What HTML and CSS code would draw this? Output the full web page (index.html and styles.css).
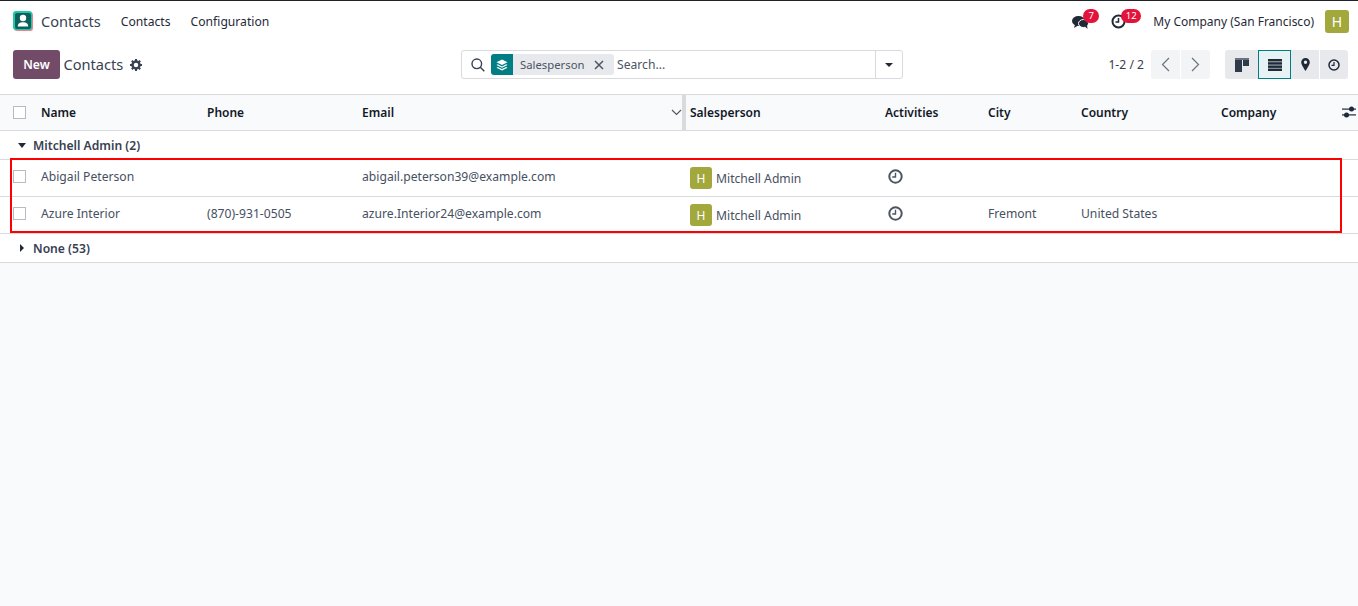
FILE: index.html
```html
<!DOCTYPE html>
<html lang="en">
<head>
<meta charset="utf-8">
<title>Contacts</title>
<link rel="stylesheet" href="styles.css">
</head>
<body>
<header class="navbar">
  <div class="nav-left">
    <svg class="app-logo" width="20" height="20" viewBox="0 0 20 20"><rect x="1" y="1" width="19" height="19" rx="3" fill="#f0808c"/><rect width="19" height="19" rx="3" fill="#1ec9a8"/><rect x="2" y="2" width="16" height="16" rx="2" fill="#0f5f5c"/><circle cx="10" cy="7" r="3.200" fill="#fff"/><path d="M4.800 15.500c0-3 2.200-4.300 5.200-4.300 3 0 5.200 1.300 5.200 4.300z" fill="#fff"/></svg>
    <span class="app-name">Contacts</span>
    <span class="nav-link">Contacts</span>
    <span class="nav-link">Configuration</span>
  </div>
  <div class="nav-right">
    <span class="systray chat">
      <svg width="17" height="15" viewBox="0 0 17 15"><ellipse cx="6.500" cy="6" rx="6.500" ry="5" fill="#1f2937"/><path d="M3 9.500 2 13l4-2.500z" fill="#1f2937"/><ellipse cx="11.500" cy="8.500" rx="5" ry="4" fill="#1f2937" stroke="#fff"/><path d="M13 11.500l2.500 2.500-.5-4z" fill="#1f2937"/></svg>
      <span class="badge">7</span>
    </span>
    <span class="systray clock">
      <svg width="15" height="15" viewBox="0 0 15 15" fill="none" stroke="#1f2937" stroke-width="2"><circle cx="7.500" cy="7.500" r="6"/><path d="M7.500 4v4H4.500" stroke-width="1.500"/></svg>
      <span class="badge">12</span>
    </span>
    <span class="company">My Company (San Francisco)</span>
    <span class="avatar avatar-lg">H</span>
  </div>
</header>

<section class="control-panel">
  <div class="cp-left">
    <button class="btn-new">New</button>
    <span class="breadcrumb">Contacts</span>
    <svg class="gear" width="12" height="12" viewBox="0 0 12 12"><circle cx="6" cy="6" r="3.500" fill="none" stroke="#374151" stroke-width="2.500"/><path d="M6 0v2M6 10v2M0 6h2M10 6h2M1.800 1.800l1.400 1.400M8.800 8.800l1.400 1.400M1.800 10.200l1.400-1.400M8.800 3.200l1.400-1.400" stroke="#374151" stroke-width="2"/></svg>
  </div>
  <div class="search">
    <svg class="search-icon" width="14" height="14" viewBox="0 0 14 14" fill="none" stroke="#374151" stroke-width="1.400"><circle cx="5.800" cy="5.800" r="4.800"/><path d="M9.300 9.300 13.300 13.300"/></svg>
    <span class="facet">
      <span class="facet-icon"><svg width="12" height="12" viewBox="0 0 12 12" fill="#fff"><path d="M6 .5 11.500 3.300 6 6 .5 3.300z"/><path d="M1.800 5.300 6 7.400l4.200-2.100 1.300.7L6 8.800.5 6z"/><path d="M1.800 8 6 10l4.200-2 1.300.7L6 11.500.5 8.700z"/></svg></span>
      <span class="facet-label">Salesperson</span>
      <svg class="facet-x" width="10" height="10" viewBox="0 0 10 10" stroke="#4b5563" stroke-width="1.500"><path d="M1 1l8 8M9 1l-8 8"/></svg>
    </span>
    <span class="search-placeholder">Search...</span>
    <span class="search-drop"><i class="caret-down"></i></span>
  </div>
  <div class="cp-right">
    <span class="pager">1-2 / 2</span>
    <span class="pager-btns">
      <span class="pager-btn"><svg width="9" height="15" viewBox="0 0 9 15" fill="none" stroke="#6b7280" stroke-width="1.200"><path d="M8 1 1.500 7.500 8 14"/></svg></span>
      <span class="pager-btn"><svg width="9" height="15" viewBox="0 0 9 15" fill="none" stroke="#6b7280" stroke-width="1.200"><path d="M1 1l6.500 6.500L1 14"/></svg></span>
    </span>
    <span class="views">
      <span class="view view-kanban"><svg width="14" height="14" viewBox="0 0 14 14"><rect width="14" height="2" fill="#6b7280"/><rect y="2" width="7" height="12" fill="#2f3a4a"/><rect x="8" y="2" width="6" height="6" fill="#2f3a4a"/></svg></span>
      <span class="view active"><svg width="14" height="12" viewBox="0 0 14 12" fill="#1f2937"><rect width="14" height="2.500"/><rect y="3.200" width="14" height="2.500"/><rect y="6.400" width="14" height="2.500"/><rect y="9.500" width="14" height="2.500"/></svg></span>
      <span class="view view-map"><svg width="9" height="13" viewBox="0 0 9 13"><path fill-rule="evenodd" d="M4.500 0a4.300 4.300 0 0 1 4.300 4.300C8.800 7 4.500 13 4.500 13S.2 7 .2 4.300A4.300 4.300 0 0 1 4.500 0zm0 2.600a1.700 1.700 0 1 0 0 3.400 1.700 1.700 0 0 0 0-3.400z" fill="#1f2937"/></svg></span>
      <span class="view view-activity"><svg width="12" height="12" viewBox="0 0 12 12" fill="none" stroke="#1f2937" stroke-width="1.500"><circle cx="6" cy="6" r="5"/><path d="M6 3v3.300H3.500" stroke-width="1.200"/></svg></span>
    </span>
  </div>
</section>

<main class="list">
  <div class="row head">
    <span class="cell check"><i class="box"></i></span>
    <span>Name</span>
    <span>Phone</span>
    <span class="email-head">Email<svg width="11" height="7" viewBox="0 0 11 7" fill="none" stroke="#4b5563" stroke-width="1.100"><path d="M1 1l4.500 4.500L10 1"/></svg></span>
    <span class="sales-head">Salesperson</span>
    <span>Activities</span>
    <span>City</span>
    <span>Country</span>
    <span>Company</span>
    <svg class="col-opts" width="14" height="12" viewBox="0 0 14 12" fill="#1f2937"><rect y="2.500" width="14" height="1.200"/><rect y="8.300" width="14" height="1.200"/><circle cx="9.500" cy="3" r="2.500"/><circle cx="4.500" cy="9" r="2.500"/></svg>
  </div>
  <div class="group open"><i class="caret-down dark"></i><span>Mitchell Admin (2)</span></div>
  <div class="row record">
    <span class="cell check"><i class="box"></i></span>
    <span>Abigail Peterson</span>
    <span></span>
    <span>abigail.peterson39@example.com</span>
    <span class="person"><span class="avatar">H</span>Mitchell Admin</span>
    <span class="activity"><svg width="15" height="15" viewBox="0 0 15 15" fill="none" stroke="#4b5563" stroke-width="2"><circle cx="7.500" cy="7.500" r="6.200"/><path d="M7.500 3.800v4.200H4.200" stroke-width="1.400"/></svg></span>
    <span></span><span></span><span></span>
  </div>
  <div class="row record">
    <span class="cell check"><i class="box"></i></span>
    <span>Azure Interior</span>
    <span>(870)-931-0505</span>
    <span>azure.Interior24@example.com</span>
    <span class="person"><span class="avatar">H</span>Mitchell Admin</span>
    <span class="activity"><svg width="15" height="15" viewBox="0 0 15 15" fill="none" stroke="#4b5563" stroke-width="2"><circle cx="7.500" cy="7.500" r="6.200"/><path d="M7.500 3.800v4.200H4.200" stroke-width="1.400"/></svg></span>
    <span>Fremont</span>
    <span>United States</span>
    <span></span>
  </div>
  <div class="group closed"><i class="caret-right"></i><span>None (53)</span></div>
  <div class="highlight"></div>
</main>
</body>
</html>
```

FILE: styles.css
```css
* { box-sizing: border-box; }
html, body { margin: 0; height: 100%; }
body {
  font-family: "Noto Sans", "Open Sans", sans-serif;
  font-size: 12.150px;
  color: #465061;
  background: #f9fafb;
  overflow: hidden;
}
i { display: block; }

.navbar {
  height: 41px;
  padding: 0 9px 0 13px;
  background: #fff;
  border-top: 1px solid #1f2428;
  display: flex;
  align-items: center;
  justify-content: space-between;
}
.nav-left, .nav-right { display: flex; align-items: center; }
.app-logo { margin-right: 8px; margin-top: -1px; }
.app-name { font-size: 14.600px; color: #374151; margin-right: 20px; }
.nav-link { color: #1f2937; margin-right: 20px; }
.systray { position: relative; display: flex; align-items: center; }
.chat { margin-right: 22px; margin-top: 2px; }
.clock { margin-right: 27px; margin-top: 1px; }
.badge {
  position: absolute;
  left: 11px;
  top: -6px;
  height: 14px;
  min-width: 16px;
  padding: 0 4px;
  border-radius: 8px;
  background: #e3143c;
  color: #fff;
  font-size: 9.500px;
  line-height: 14px;
  text-align: center;
}
.clock .badge { left: 10px; top: -5px; width: 20px; }
.company { color: #1f2937; margin-right: 11px; font-size: 12px; }
.avatar {
  width: 22px;
  height: 22px;
  border-radius: 3px;
  background: #a2a83c;
  color: #fff;
  display: inline-flex;
  align-items: center;
  justify-content: center;
  font-size: 12px;
  flex: none;
}
.avatar-lg { width: 24px; height: 23px; font-size: 14px; }

.control-panel {
  height: 53px;
  background: #fff;
  padding: 0 10px 6px 13px;
  display: grid;
  grid-template-columns: 448px 442px 1fr;
  align-items: center;
}
.cp-left { display: flex; align-items: center; }
.btn-new {
  width: 47px;
  height: 29px;
  border: 0;
  border-radius: 3px;
  background: #714b67;
  color: #fff;
  font: 600 12.150px "Noto Sans", sans-serif;
  padding: 0;
}
.breadcrumb { font-size: 14.600px; color: #374151; margin: -2px 7px 0 3.500px; }
.gear { margin-top: 0; }
.search {
  height: 29px;
  border: 1px solid #d8dadd;
  border-radius: 3px;
  background: #fff;
  display: flex;
  align-items: center;
}
.search-icon { margin: 0 6px 0 9px; }
.facet {
  height: 21px;
  display: flex;
  align-items: center;
  background: #e7e9ed;
  border-radius: 3px;
  margin-right: 3px;
  font-size: 11.300px;
  color: #4b5563;
}
.facet-icon {
  width: 22px;
  height: 21px;
  background: #017e84;
  border-radius: 3px 0 0 3px;
  display: flex;
  align-items: center;
  justify-content: center;
}
.facet-label { padding: 0 8px 0 7px; width: 81px; }
.facet-x { margin-right: 10px; }
.search-placeholder { flex: 1; color: #4b5563; }
.search-drop {
  width: 27px;
  align-self: stretch;
  border-left: 1px solid #d8dadd;
  display: flex;
  align-items: center;
  justify-content: center;
}
.caret-down {
  width: 0; height: 0;
  border: 4px solid transparent;
  border-top-color: #1f2937;
  border-bottom-width: 0;
}
.cp-right { display: flex; align-items: center; justify-content: flex-end; }
.pager { margin-right: 7px; color: #374151; }
.pager-btns { display: flex; gap: 1px; margin-right: 15px; }
.pager-btn {
  width: 29px;
  height: 29px;
  background: #f3f4f6;
  display: flex;
  align-items: center;
  justify-content: center;
}
.pager-btn:first-child { border-radius: 3px 0 0 3px; }
.pager-btn:last-child { border-radius: 0 3px 3px 0; }
.views { display: flex; }
.view {
  height: 29px;
  background: #e7e9ed;
  display: flex;
  align-items: center;
  justify-content: center;
}
.view-kanban { width: 33px; border-radius: 3px 0 0 3px; }
.view.active { width: 33px; background: #e6f2f3; border: 1px solid #017e84; }
.view-map { width: 29px; border-right: 1px solid #fff; }
.view-activity { width: 28px; border-radius: 0 3px 3px 0; }

.list { position: relative; background: #fff; }
.row {
  display: grid;
  grid-template-columns: 41px 166px 155px 328px 195px 103px 93px 140px 1fr;
  align-items: center;
  border-bottom: 1px solid #d8dadd;
}
.head {
  height: 37px;
  border-top: 1px solid #d8dadd;
  background: #f9fafb;
  font-weight: 600;
  font-size: 12px;
  color: #111827;
  position: relative;
}
.cell.check { padding-left: 13px; display: flex; }
.box {
  width: 13px;
  height: 13px;
  border: 1px solid #b8bcc2;
  background: #fff;
}
.email-head {
  display: flex;
  align-items: center;
  justify-content: space-between;
  align-self: stretch;
  margin-right: -1px;
}
.email-head svg { margin-right: 9px; margin-top: -1px; }
.sales-head {
  align-self: stretch;
  display: flex;
  align-items: center;
  position: relative;
}
.sales-head::before {
  content: "";
  position: absolute;
  left: -8px;
  top: 0;
  bottom: 0;
  width: 4px;
  background: #d8dadd;
}
.col-opts { position: absolute; right: 2px; top: 11px; }
.record { height: 37px; padding-bottom: 3px; }
.person { display: flex; align-items: center; gap: 4px; padding-top: 3px; }
.activity { display: flex; padding-left: 3px; }
.group {
  display: flex;
  align-items: center;
  font-weight: 600;
  color: #374151;
  border-bottom: 1px solid #d8dadd;
}
.group.open { height: 29px; padding-left: 18px; gap: 7px; }
.group.closed { height: 29px; padding-left: 20px; gap: 9px; }
.caret-down.dark { border-width: 5px 4.500px 0; border-top-color: #1f2937; }
.caret-right {
  width: 0; height: 0;
  border: 4px solid transparent;
  border-left: 4px solid #1f2937;
  border-right-width: 0;
}
.highlight {
  position: absolute;
  left: 10px;
  top: 64px;
  width: 1332px;
  height: 75px;
  border: 2px solid #f00;
  pointer-events: none;
}
```
